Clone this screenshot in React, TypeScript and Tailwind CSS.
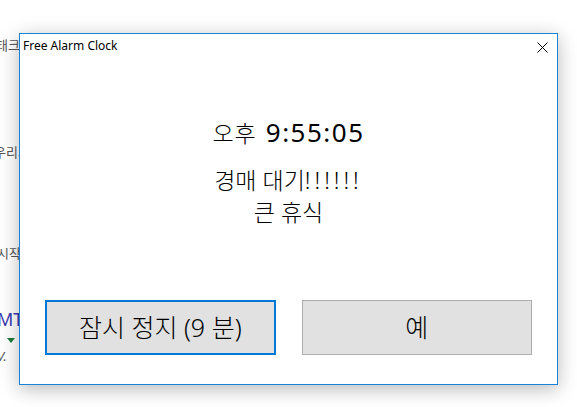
import React from "react";

const font = { fontFamily: '"Noto Sans", "Noto Sans CJK KR", sans-serif' };

export default function App() {
  return (
    <div
      className="relative w-[577px] h-[407px] overflow-hidden bg-white"
      style={font}
    >
      {/* desktop app underneath (partially visible) */}
      <div className="absolute left-[-4px] top-[36px] text-[13px] text-[#555] whitespace-nowrap">태크</div>
      <div className="absolute left-[-6px] top-[143px] text-[13px] text-[#555] whitespace-nowrap">우리의</div>
      <div className="absolute left-[-3px] top-[244px] text-[13px] text-[#555] whitespace-nowrap">시작</div>
      <div className="absolute left-[-3px] top-[306px] text-[18px] text-[#3b3bb0] whitespace-nowrap">MT</div>
      <div className="absolute left-[7px] top-[338px] w-0 h-0 border-l-[4px] border-r-[4px] border-t-[5px] border-l-transparent border-r-transparent border-t-[#1e7b3a]" />
      <div className="absolute left-[-3px] top-[347px] text-[13px] italic text-[#555] whitespace-nowrap">V.</div>

      {/* dialog window */}
      <div className="absolute left-[19px] top-[33px] w-[539px] h-[352px] bg-white border border-[#1883d7] shadow-[0_4px_18px_rgba(0,0,0,0.28)] flex flex-col">
        <div className="h-[24px] flex items-center justify-between pl-[3px] pr-[9px]">
          <span className="text-[12px] text-black leading-none">Free Alarm Clock</span>
          <svg width="11" height="11" viewBox="0 0 11 11" className="mt-[2px]">
            <path d="M0.5 0.5 L10.5 10.5 M10.5 0.5 L0.5 10.5" stroke="#000" strokeWidth="1" />
          </svg>
        </div>
        <div className="flex-1 flex flex-col items-center text-black">
          <div className="mt-[57px] text-[26px] leading-[34px] tracking-[1.5px] whitespace-nowrap">
            <span className="text-[23px] font-light tracking-[1px] mr-[9px]">오후</span>9:55:05
          </div>
          <div className="mt-[14px] text-[23px] leading-[32px] text-center font-light whitespace-nowrap">
            <div>경매 대기<span className="tracking-[4px]">!!!!!!</span></div>
            <div>큰 휴식</div>
          </div>
        </div>
        <div className="flex gap-[26px] pl-[25px] pr-[25px] pb-[29px]">
          <button className="w-[231px] h-[55px] bg-[#e1e1e1] border-2 border-[#0078d7] text-[25px] font-light text-black flex items-center justify-center whitespace-nowrap">
            잠시 정지 (9 분)
          </button>
          <button className="w-[231px] h-[55px] bg-[#e1e1e1] border border-[#adadad] text-[25px] font-light text-black flex items-center justify-center">
            예
          </button>
        </div>
      </div>
    </div>
  );
}
